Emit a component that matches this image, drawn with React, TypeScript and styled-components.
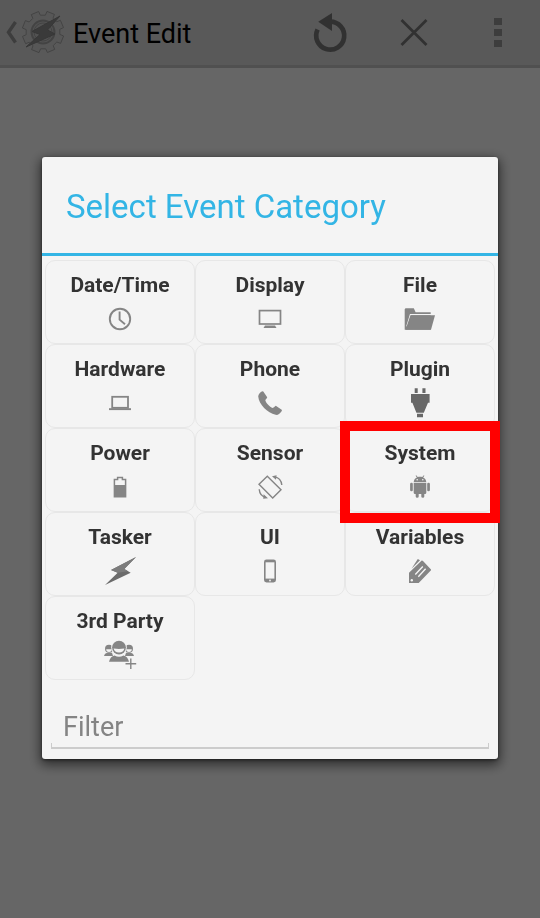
import React from "react";
import styled, { createGlobalStyle } from "styled-components";

const GlobalStyle = createGlobalStyle`
  * { box-sizing: border-box; }
  body { margin: 0; background: #ffffff; font-family: Roboto, "Liberation Sans", sans-serif; }
  button, input { font-family: inherit; }
`;

const Page = styled.div`
  min-height: 100vh;
  background: #ffffff;
`;

const ActionBar = styled.header`
  display: flex;
  align-items: center;
  height: 68px;
  background: #dedede;
  border-bottom: 3px solid #c8c8c8;
`;

const BarButton = styled.button<{ $width: number }>`
  display: flex;
  align-items: center;
  justify-content: center;
  width: ${(p) => p.$width}px;
  height: 100%;
  padding: 0;
  border: 0;
  background: none;
`;

const BarTitle = styled.h1`
  flex: 1;
  margin: 0;
  padding: 2px 0 0 8px;
  font-size: 27px;
  line-height: 36px;
  font-weight: 400;
  color: #000000;
`;

const Scrim = styled.div`
  position: fixed;
  inset: 0;
  display: flex;
  align-items: center;
  justify-content: center;
  padding: 0 42px 2px;
  background: rgba(0, 0, 0, 0.6);
`;

const Dialog = styled.section`
  width: 100%;
  padding-bottom: 10px;
  border-radius: 3px;
  background: #f4f4f4;
  box-shadow: 0 4px 12px 2px rgba(0, 0, 0, 0.55), 0 1px 3px rgba(0, 0, 0, 0.5);
`;

const DialogTitle = styled.h2`
  margin: 0;
  padding: 30px 24px 26px;
  border-bottom: 3px solid #33b5e5;
  font-size: 33px;
  line-height: 40px;
  font-weight: 400;
  color: #33b5e5;
`;

const CategoryGrid = styled.div`
  display: grid;
  grid-template-columns: repeat(3, 1fr);
  grid-auto-rows: 84px;
  padding: 4px 3px 24px;
`;

const Cell = styled.div`
  position: relative;
  display: flex;
`;

const CategoryButton = styled.button`
  display: flex;
  flex: 1;
  flex-direction: column;
  align-items: center;
  gap: 2px;
  padding: 9px 0 0;
  border: 1px solid #e7e7e7;
  border-radius: 10px;
  background: none;
  color: #333333;
  font-size: 21px;
  font-weight: 700;
  line-height: 30px;
`;

const Marker = styled.span`
  position: absolute;
  z-index: 1;
  inset: -7px -5px -11px;
  border: 10px solid #ff0000;
  pointer-events: none;
`;

const FilterInput = styled.input`
  display: block;
  width: calc(100% - 18px);
  height: 45px;
  margin: 0 9px;
  padding: 2px 12px 0;
  border: 0;
  border-bottom: 2px solid #cccccc;
  border-radius: 0;
  outline: 0;
  background: linear-gradient(#cccccc, #cccccc) left bottom / 1px 4px no-repeat,
    linear-gradient(#cccccc, #cccccc) right bottom / 1px 4px no-repeat;
  font-size: 27px;
  color: #333333;
  &::placeholder { color: #848484; opacity: 1; }
`;

const Glyph = styled.svg`
  display: block;
  width: 40px;
  height: 34px;
  overflow: visible;
`;

const INK = "#858585";
const PAPER = "#f4f4f4";

const icons: Record<string, React.ReactNode> = {
  "Date/Time": (
    <g fill="none" stroke={INK} strokeWidth="1.9">
      <circle cx="20" cy="17" r="10.2" />
      <path d="M19.6 9.5V17.6L25 22.2" />
    </g>
  ),
  Display: (
    <>
      <rect x="9.5" y="8.6" width="21" height="13.4" fill="none" stroke={INK} strokeWidth="1.7" />
      <path d="M15 23.5H25L26.5 26H13.5Z" fill={INK} />
    </>
  ),
  File: (
    <>
      <path d="M4.7 27.7V7.2L5.5 6.3H13.8L15.6 10.3H30.7V27.7Z" fill={INK} />
      <path d="M6.8 24.5L10.4 12.6H35" fill="none" stroke={PAPER} strokeWidth="1.2" />
      <path d="M10.5 13.2H35L31 27.7H5.5Z" fill={INK} />
    </>
  ),
  Hardware: (
    <>
      <rect x="12.2" y="10.8" width="15.8" height="11" fill="none" stroke={INK} strokeWidth="1.8" />
      <path d="M9 22.2H31V24.1H9Z" fill={INK} />
    </>
  ),
  Phone: (
    <path
      d="M8.2 10.3C8.5 7.8 10.3 6.2 12.4 5.2L13.3 5.5L17.2 11.2C17.3 12 15.5 13.3 15.3 14.3C16.3 17.5 19.5 20.8 22.7 22C23.9 21.9 24.8 20 25.8 19.8L31.7 23.7C32.2 24.2 31.8 25.1 31.2 25.8C29.6 28.1 27.7 29.3 25.6 28.8C17.5 26.7 8.9 18.8 8.2 10.3Z"
      fill={INK}
    />
  ),
  Plugin: (
    <path
      d="M14.7 2.2H17.7V7H14.7ZM22.4 2.2H25.5V7H22.4ZM11 8H29.6V16.7H28L23.8 26.8H16.4L12.4 16.7H11ZM17 27.8H23V31.3H17Z"
      fill="#686868"
    />
  ),
  Power: (
    <>
      <path d="M14.4 9.6H17.6V7.4H22.4V9.6H25.6V26.7H14.4Z" fill="none" stroke={INK} strokeWidth="1.5" />
      <path d="M14 15H26V27H14Z" fill={INK} />
    </>
  ),
  Sensor: (
    <g fill="none" stroke={INK} strokeWidth="1.4">
      <path d="M17.3 6.2L31 19.7L22.7 28L9 14.3Z" />
      <path d="M24.5 6.9C28.5 7.5 31.3 10.5 31.8 15M15.5 27.1C11.8 26.5 9.6 23.6 9.2 19.3" />
      <path d="M22 6.2L26.6 5.2L26 9.8ZM18 28.2L13.6 24.2L13.2 28.7Z" fill={INK} stroke="none" />
    </g>
  ),
  System: (
    <>
      <path d="M13.7 12.3C13.8 9.8 15 8.3 16.9 7.4L15.6 5.8L16.2 5.3L17.7 7C19.2 6.5 20.8 6.5 22.3 7L23.8 5.3L24.4 5.8L23.1 7.4C25 8.3 26.2 9.8 26.3 12.3Z" fill={INK} />
      <path d="M13.7 13H26.3V22.8Q26.3 24 25 24H24.3V26.5Q24.3 27.8 22.8 27.8T21.3 26.5V24H18.7V26.5Q18.7 27.8 17.2 27.8T15.7 26.5V24H15Q13.7 24 13.7 22.8Z" fill={INK} />
      <rect x="10.1" y="12.7" width="2.7" height="8.6" rx="1.3" fill={INK} />
      <rect x="27.2" y="12.7" width="2.7" height="8.6" rx="1.3" fill={INK} />
      <circle cx="17.2" cy="9.8" r="0.8" fill={PAPER} />
      <circle cx="22.8" cy="9.8" r="0.8" fill={PAPER} />
    </>
  ),
  Tasker: (
    <>
      <path d="M36 3L11 16L17.7 18.7L5 31L30.7 18.7L24.3 15Z" fill="#6b6b6b" />
      <path d="M36 3L11 16L17.7 18.7L28 17.2L24.3 15Z" fill="#7c7c7c" />
    </>
  ),
  UI: (
    <>
      <path d="M16.5 5.6H23.5Q26 5.6 26 8V26Q26 28.4 23.5 28.4H16.5Q14 28.4 14 26V8Q14 5.6 16.5 5.6Z" fill={INK} />
      <path d="M15.6 8.3H24.4V24.6H15.6Z" fill={PAPER} />
      <circle cx="20" cy="26.5" r="0.9" fill={PAPER} />
    </>
  ),
  Variables: (
    <>
      <path d="M17.8 5L20 6.2L11.5 14.7Z" fill={INK} />
      <path d="M9 18.7L21.7 6.5Q22.5 6.3 23 7L31 15.5V16.2L18.7 29H9Z" fill={INK} />
      <path d="M15.3 20.6L22.8 12.6M18.3 22.7L25.6 14.8" fill="none" stroke={PAPER} strokeWidth="1.4" />
      <circle cx="11.8" cy="26.2" r="1.2" fill={PAPER} />
    </>
  ),
  "3rd Party": (
    <>
      <circle cx="9" cy="10.7" r="4" fill={INK} />
      <circle cx="29" cy="10.7" r="4" fill={INK} />
      <path d="M6.2 11.2H11.8A2.8 2.8 0 0 1 6.2 11.2ZM26.2 11.2H31.8A2.8 2.8 0 0 1 26.2 11.2Z" fill={PAPER} />
      <path d="M4 18Q5 14.8 8 14.8H12L13 18ZM34 18Q33 14.8 30 14.8H26L25 18Z" fill={INK} />
      <circle cx="19" cy="9.6" r="7.8" fill={PAPER} />
      <circle cx="19" cy="9.6" r="6.9" fill={INK} />
      <path d="M13.6 10.5Q19 11.3 24.4 10.5A5.5 5 0 0 1 13.6 10.5Z" fill={PAPER} />
      <path d="M9 23.8Q10.2 18.3 14.5 17.4Q19 20 23.5 17.4Q27.8 18.3 29 23.8Z" fill={INK} />
      <path d="M30.8 18.5V32M24 25.7H37" stroke={PAPER} strokeWidth="3.2" />
      <path d="M30.8 20.4V31M25.5 25.7H36.2" stroke={INK} strokeWidth="1.4" />
    </>
  ),
};

const categories = [
  "Date/Time", "Display", "File",
  "Hardware", "Phone", "Plugin",
  "Power", "Sensor", "System",
  "Tasker", "UI", "Variables",
  "3rd Party",
];

const teeth = Array.from({ length: 8 }, (_, i) => {
  const point = (radius: number, degrees: number) => {
    const angle = ((degrees + 22 + i * 45) * Math.PI) / 180;
    return `${(37 + radius * Math.cos(angle)).toFixed(1)} ${(32 + radius * Math.sin(angle)).toFixed(1)}`;
  };
  return `${point(17, -14)} L${point(21, -11)} L${point(21, 11)} L${point(17, 14)}`;
});

const BackIcon = () => (
  <svg width="65" height="65" viewBox="0 0 65 65" aria-hidden="true">
    <path d="M15.5 22L8.5 32.3L15.5 42.5" fill="none" stroke="#989898" strokeWidth="3.4" />
    <g transform="translate(6 0)" fill="none" stroke="#a8a8a8">
      <path d={`M${teeth.join(" L")}Z`} fill="#dadada" strokeLinejoin="round" />
      <circle cx="37" cy="32" r="11.5" fill="#cccccc" strokeWidth="2" />
      <circle cx="37" cy="32" r="9" />
      <path d="M54 16L26 31.5L34 34.5L20 47L49 34L41.5 30Z" fill="#929292" stroke="#898989" />
    </g>
  </svg>
);

export default function App() {
  return (
    <>
      <GlobalStyle />
      <Page>
        <ActionBar>
          <BarButton $width={65} aria-label="Back">
            <BackIcon />
          </BarButton>
          <BarTitle>Event Edit</BarTitle>
          <BarButton $width={84} aria-label="Revert">
            <svg width="40" height="48" viewBox="0 0 40 48" aria-hidden="true">
              <path d="M20 12.6A14 14 0 1 1 7.6 20.5" fill="none" stroke="#7c7c7c" strokeWidth="4.7" />
              <path d="M22 4V22L8.2 12.8Z" fill="#7c7c7c" />
            </svg>
          </BarButton>
          <BarButton $width={84} aria-label="Cancel">
            <svg width="28" height="28" viewBox="0 0 28 28" aria-hidden="true">
              <path d="M1.5 1L26.5 26M26.5 1L1.5 26" stroke="#7c7c7c" strokeWidth="2.8" />
            </svg>
          </BarButton>
          <BarButton $width={84} aria-label="More options">
            <svg width="8" height="30" viewBox="0 0 8 30" aria-hidden="true">
              <path d="M0 0H8V7H0ZM0 11H8V18H0ZM0 22H8V29H0Z" fill="#9a9a9a" />
            </svg>
          </BarButton>
        </ActionBar>
      </Page>
      <Scrim>
        <Dialog role="dialog" aria-modal="true" aria-labelledby="dialog-title">
          <DialogTitle id="dialog-title">Select Event Category</DialogTitle>
          <CategoryGrid>
            {categories.map((name) => (
              <Cell key={name}>
                <CategoryButton>
                  {name}
                  <Glyph viewBox="0 0 40 34" aria-hidden="true">
                    {icons[name]}
                  </Glyph>
                </CategoryButton>
                {name === "System" && <Marker />}
              </Cell>
            ))}
          </CategoryGrid>
          <FilterInput type="text" placeholder="Filter" aria-label="Filter" />
        </Dialog>
      </Scrim>
    </>
  );
}
